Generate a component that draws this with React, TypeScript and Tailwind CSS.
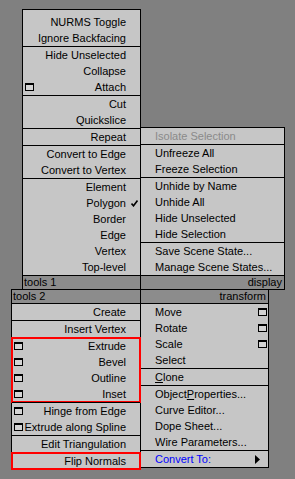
import React from 'react';

type Item = {
  label: string;
  icon?: boolean;
  check?: boolean;
  disabled?: boolean;
  blue?: boolean;
  arrow?: boolean;
  u?: number;
};

type Group = { items: Item[]; red?: boolean; pad?: boolean };

const WinIcon: React.FC = () => (
  <svg width="9" height="8" viewBox="0 0 9 8" className="block">
    <rect x="0.5" y="0.5" width="8" height="7" fill="#d4d4d4" stroke="#000" />
    <rect x="0" y="0" width="9" height="2" fill="#000" />
  </svg>
);

const Check: React.FC = () => (
  <svg width="7" height="7" viewBox="0 0 7 7" className="block">
    <path d="M0.5 3.5 L2.5 5.8 L6.5 0.5" fill="none" stroke="#000" strokeWidth="1.6" />
  </svg>
);

const Arrow: React.FC = () => (
  <svg width="5" height="9" viewBox="0 0 5 9" className="block">
    <path d="M0 0 L5 4.5 L0 9 Z" fill="#000" />
  </svg>
);

const Label: React.FC<{ item: Item }> = ({ item }) => {
  if (item.u === undefined) return <>{item.label}</>;
  const i = item.u;
  return (
    <>
      {item.label.slice(0, i)}
      <u className="underline-offset-1">{item.label[i]}</u>
      {item.label.slice(i + 1)}
    </>
  );
};

const Row: React.FC<{ item: Item; side: 'left' | 'right' }> = ({ item, side }) => {
  const color = item.disabled ? 'text-[#8a8a8a]' : item.blue ? 'text-[#0000ff]' : 'text-black';
  return (
    <div
      className={`relative flex h-4 items-center whitespace-nowrap leading-4 ${color} ${
        side === 'left' ? 'justify-end pr-[14px]' : 'justify-start pl-[14px]'
      }`}
    >
      {item.icon && (
        <span className={`absolute top-[4px] ${side === 'left' ? 'left-[2px]' : 'right-[1px]'}`}>
          <WinIcon />
        </span>
      )}
      <Label item={item} />
      {item.check && (
        <span className="absolute right-[2px] top-[5px]">
          <Check />
        </span>
      )}
      {item.arrow && (
        <span className="absolute right-[8px] top-[4px]">
          <Arrow />
        </span>
      )}
    </div>
  );
};

const Bar: React.FC<{ title: string; side: 'left' | 'right'; pos: 'top' | 'bottom' }> = ({ title, side, pos }) => (
  <div
    className={`h-[14px] bg-[#8c8c8c] text-black leading-[13px] ${pos === 'top' ? 'border-b' : 'border-t'} border-black ${
      side === 'left' ? 'text-left pl-px' : 'text-right pr-[2px]'
    }`}
  >
    {title}
  </div>
);

const Quad: React.FC<{
  groups: Group[];
  side: 'left' | 'right';
  title: string;
  pos: 'top' | 'bottom';
  className: string;
}> = ({ groups, side, title, pos, className }) => (
  <div className={`border border-black bg-[#c6c6c6] ${className}`}>
    {pos === 'top' && <Bar title={title} side={side} pos="top" />}
    {groups.map((g, gi) => (
      <div key={gi} className={`relative ${gi > 0 ? 'border-t border-black' : ''} ${g.pad ? 'pt-[4px]' : ''}`}>
        {g.items.map((it) => (
          <Row key={it.label} item={it} side={side} />
        ))}
        {g.red && <div className="pointer-events-none absolute -inset-px border-2 border-[#ff0000]" />}
      </div>
    ))}
    {pos === 'bottom' && <Bar title={title} side={side} pos="bottom" />}
  </div>
);

const tools1: Group[] = [
  { pad: true, items: [{ label: 'NURMS Toggle' }, { label: 'Ignore Backfacing' }] },
  { items: [{ label: 'Hide Unselected' }, { label: 'Collapse' }, { label: 'Attach', icon: true }] },
  { items: [{ label: 'Cut' }, { label: 'Quickslice' }] },
  { items: [{ label: 'Repeat' }] },
  { items: [{ label: 'Convert to Edge' }, { label: 'Convert to Vertex' }] },
  {
    items: [
      { label: 'Element' },
      { label: 'Polygon', check: true },
      { label: 'Border' },
      { label: 'Edge' },
      { label: 'Vertex' },
      { label: 'Top-level' },
    ],
  },
];

const display: Group[] = [
  { items: [{ label: 'Isolate Selection', disabled: true }] },
  { items: [{ label: 'Unfreeze All' }, { label: 'Freeze Selection' }] },
  {
    items: [
      { label: 'Unhide by Name' },
      { label: 'Unhide All' },
      { label: 'Hide Unselected' },
      { label: 'Hide Selection' },
    ],
  },
  { items: [{ label: 'Save Scene State...' }, { label: 'Manage Scene States...' }] },
];

const tools2: Group[] = [
  { items: [{ label: 'Create' }] },
  { items: [{ label: 'Insert Vertex' }] },
  {
    red: true,
    items: [
      { label: 'Extrude', icon: true },
      { label: 'Bevel', icon: true },
      { label: 'Outline', icon: true },
      { label: 'Inset', icon: true },
    ],
  },
  { items: [{ label: 'Hinge from Edge', icon: true }, { label: 'Extrude along Spline', icon: true }] },
  { items: [{ label: 'Edit Triangulation' }] },
  { red: true, items: [{ label: 'Flip Normals' }] },
];

const transform: Group[] = [
  {
    items: [
      { label: 'Move', icon: true },
      { label: 'Rotate', icon: true },
      { label: 'Scale', icon: true },
      { label: 'Select' },
    ],
  },
  { items: [{ label: 'Clone', u: 0 }] },
  {
    items: [
      { label: 'Object Properties...', u: 7 },
      { label: 'Curve Editor...' },
      { label: 'Dope Sheet...' },
      { label: 'Wire Parameters...' },
    ],
  },
  { items: [{ label: 'Convert To:', blue: true, arrow: true }] },
];

const App: React.FC = () => {
  return (
    <div
      className="h-[479px] w-[295px] overflow-hidden bg-[#808080] text-[11px]"
      style={{ fontFamily: '"Liberation Sans", Arial, sans-serif' }}
    >
      <div className="flex items-end pl-[22px] pt-[9px]">
        <Quad groups={tools1} side="left" title="tools 1" pos="bottom" className="w-[119px]" />
        <Quad groups={display} side="right" title="display" pos="bottom" className="-ml-px w-[145px]" />
      </div>
      <div className="-mt-px flex items-start pl-[11px]">
        <Quad groups={tools2} side="left" title="tools 2" pos="top" className="w-[130px]" />
        <Quad groups={transform} side="right" title="transform" pos="top" className="-ml-px w-[129px]" />
      </div>
    </div>
  );
};

export default App;
